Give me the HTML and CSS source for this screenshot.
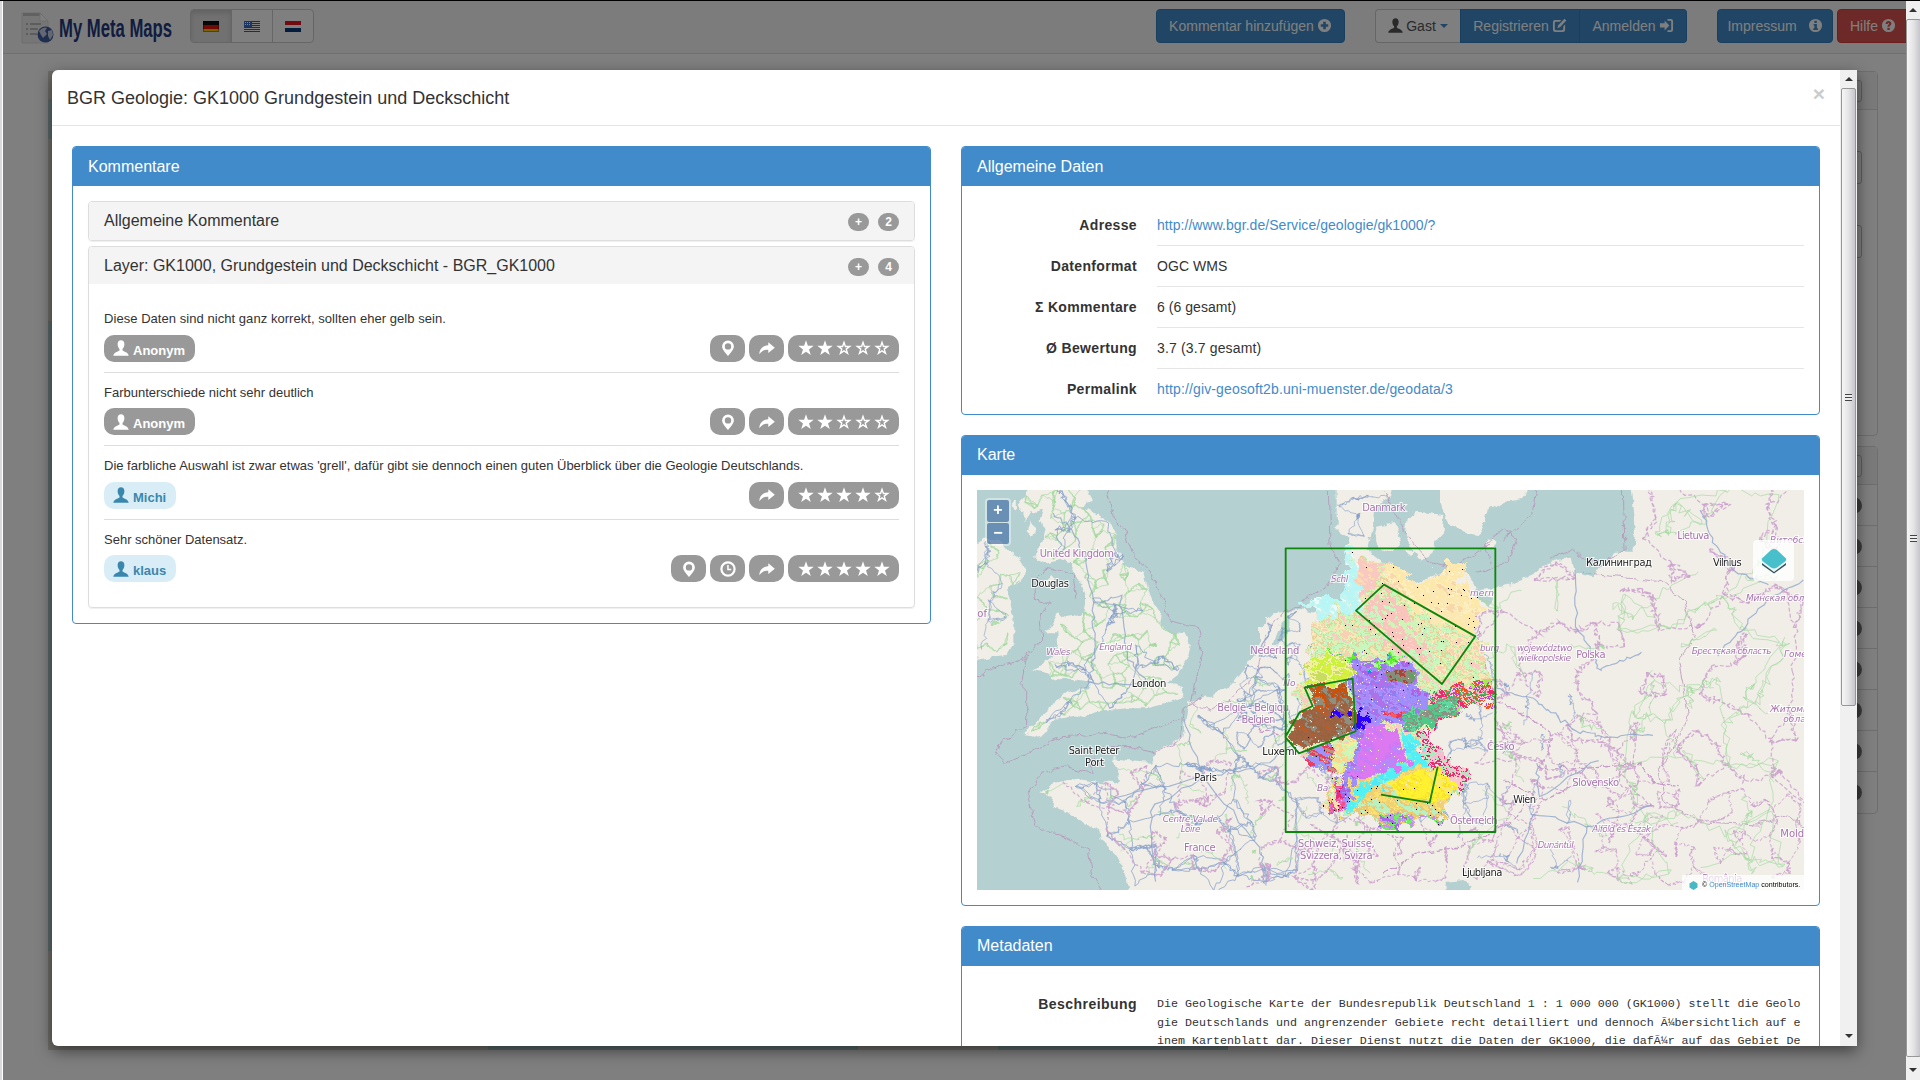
FILE: index.html
```html
<!DOCTYPE html>
<html lang="de">
<head>
<meta charset="utf-8">
<title>My Meta Maps</title>
<link rel="stylesheet" href="styles.css">
</head>
<body>
<svg class="defs" width="0" height="0" aria-hidden="true">
  <symbol id="user" viewBox="0 0 16 16"><path d="M8 .3C5.900.3 4.600 1.900 4.600 4.200c0 1.800.8 3.700 1.900 4.700v1.500C5.500 11.200.5 12.300.3 15.700h15.400c-.2-3.400-5.200-4.500-6.200-5.300V8.900c1.100-1 1.900-2.900 1.900-4.700C11.400 1.900 10.100.3 8 .3z"/></symbol>
  <symbol id="plus" viewBox="0 0 16 16"><path fill-rule="evenodd" d="M8 1a7 7 0 1 0 0 14A7 7 0 0 0 8 1zM6.600 4h2.800v2.600H12v2.800H9.400V12H6.600V9.400H4V6.600h2.600z"/></symbol>
  <symbol id="info" viewBox="0 0 16 16"><path fill-rule="evenodd" d="M8 1a7 7 0 1 0 0 14A7 7 0 0 0 8 1zM6.800 3h2.600v2.200H6.800zM6 6.400h3.500v4.400h1.100v1.900H5.600v-1.900h1.200V8.100H6z"/></symbol>
  <symbol id="question" viewBox="0 0 16 16"><path fill-rule="evenodd" d="M8 1a7 7 0 1 0 0 14A7 7 0 0 0 8 1zM5 6.300C5 4.300 6.200 3.300 8 3.300s3.100 1 3.100 2.600c0 1.900-1.900 2.100-1.900 3.300v.2H6.900c0-2.300 1.700-2.400 1.700-3.300 0-.5-.3-.7-.7-.7s-.7.3-.7.900zM6.800 10.500h2.500v2.300H6.800z"/></symbol>
  <symbol id="edit" viewBox="0 0 16 16"><path d="M3.500 2H10L8.300 4H4.300C3.600 4 3 4.600 3 5.300v6.400c0 .7.6 1.300 1.300 1.300h6.400c.7 0 1.300-.6 1.300-1.300V9l2-2v5.500a2.500 2.500 0 0 1-2.500 2.500h-8A2.500 2.500 0 0 1 1 12.500v-8A2.500 2.500 0 0 1 3.500 2z"/><path d="M13.300.7l2 2-6.600 7-3 1.100 1-3.100z"/></symbol>
  <symbol id="login" viewBox="0 0 16 16"><path d="M1 5.700h5V2.600L11 8l-5 5.200v-3H1z"/><path d="M9 1h3.500A2.500 2.500 0 0 1 15 3.500v9a2.500 2.500 0 0 1-2.500 2.500H9v-2h3.200c.5 0 .8-.3.8-.8V3.800c0-.5-.3-.8-.8-.8H9z"/></symbol>
  <symbol id="pin" viewBox="0 0 16 16"><path fill-rule="evenodd" d="M8 .5a5.900 5.900 0 0 0-5.900 5.900C2.100 10 8 15.800 8 15.800S13.900 10 13.900 6.400A5.900 5.900 0 0 0 8 .5zm0 2.700a3.200 3.200 0 1 1 0 6.400 3.200 3.200 0 0 1 0-6.400z"/></symbol>
  <symbol id="share" viewBox="0 0 16 16"><path d="M9.300 2.300L15.800 7.700l-6.500 5.200V9.800C5 9.800 2.500 11 .3 14.200.3 9.500 3.500 5.500 9.300 5.300z"/></symbol>
  <symbol id="star" viewBox="0 0 16 16"><path d="M8 .3l1.900 5.500h5.800L11 9.400l1.800 5.700L8 11.700l-4.800 3.400L5 9.400.3 5.800h5.800z"/></symbol>
  <symbol id="star-empty" viewBox="0 0 16 16"><path fill-rule="evenodd" d="M8 .3l1.900 5.500h5.800L11 9.400l1.800 5.700L8 11.700l-4.800 3.400L5 9.400.3 5.800h5.800zM8 4.600L7.100 7.200H4.500l2.100 1.600-.8 2.600L8 9.900l2.200 1.500-.8-2.600 2.100-1.600H8.900z"/></symbol>
  <symbol id="clock" viewBox="0 0 16 16"><circle cx="8" cy="8" r="6.600" fill="none" stroke="currentColor" stroke-width="2.200"/><path d="M7.200 4h1.500v3.700h2.600v1.500H7.200z"/></symbol>
</svg>

<div class="screen">
  <div class="edge"></div>
  <div class="page">
    <nav class="navbar">
      <div class="brand">
        <svg width="33" height="32" viewBox="0 0 33 32">
          <path d="M1 1h18l8 8v22H1z" fill="#ececec" stroke="#dcdcdc"/><path d="M2 1h17l3 3H2z" fill="#c3c3c3"/><path d="M19 1l8 8h-8z" fill="#fff" stroke="#ddd"/>
          <path d="M5 12h2m2 0h11M5 17h2m2 0h8M5 22h2m2 0h7" stroke="#aaa" stroke-width="1.300"/>
          <circle cx="24.500" cy="22.500" r="8" fill="#3f5a9e"/><path d="M18 19q4-5 8-3l-2 3 2 3-4 4-2-3zM27 19l4-1 1 5-3 5-2-4z" fill="#c5cfe4"/>
        </svg>
        <svg class="word" width="118" height="32" viewBox="0 0 118 32"><text class="wordmark" x="1" y="25" textLength="113" lengthAdjust="spacingAndGlyphs">My Meta Maps</text></svg>
      </div>
      <div class="langs">
        <span class="lang on"><svg width="16" height="11"><path fill="#111" d="M0 0h16v4H0z"/><path fill="#e8140c" d="M0 4h16v4H0z"/><path fill="#f4c900" d="M0 8h16v3H0z"/><path d="M.5.5h15v10H.5z" fill="none" stroke="#0005"/></svg></span>
        <span class="lang"><svg width="16" height="11"><path fill="#fff" d="M0 0h16v11H0z"/><path stroke="#e02020" d="M0 .5h16M0 2.500h16M0 4.500h16M0 6.500h16M0 8.500h16M0 10.500h16"/><path fill="#3c6cc8" d="M0 0h8v6H0z"/><path stroke="#fff" stroke-dasharray="1 1" d="M1 1.500h6M1 3.500h6"/></svg></span>
        <span class="lang"><svg width="16" height="11"><path fill="#e41420" d="M0 0h16v4H0z"/><path fill="#fff" d="M0 4h16v3H0z"/><path fill="#0a3a7a" d="M0 7h16v4H0z"/></svg></span>
      </div>
      <div class="actions">
        <span class="btn w-add">Kommentar hinzufügen <svg class="ic"><use href="#plus"/></svg></span>
        <div class="group">
          <span class="btn plain w-guest"><svg class="ic"><use href="#user"/></svg> Gast <i class="caret"></i></span>
          <span class="btn w-reg">Registrieren <svg class="ic"><use href="#edit"/></svg></span>
          <span class="btn w-log">Anmelden <svg class="ic"><use href="#login"/></svg></span>
        </div>
        <span class="btn w-imp">Impressum &nbsp;<svg class="ic"><use href="#info"/></svg></span>
        <span class="btn danger w-help">Hilfe <svg class="ic"><use href="#question"/></svg></span>
      </div>
    </nav>
    <div class="content">
      <div class="bigmap"></div>
      <aside class="side">
        <div class="box filter"><div class="box-head"><i class="ctl"></i></div><i class="ctl tall a"></i><i class="ctl tall b"></i></div>
        <div class="box list"><div class="box-head"><i class="ctl"></i></div>
          <div class="li"><i></i></div><div class="li"><i></i></div><div class="li"><i></i></div><div class="li"><i></i></div><div class="li"><i></i></div><div class="li"><i></i></div><div class="li"><i></i></div><div class="li"><i></i></div>
        </div>
      </aside>
    </div>
    <div class="backdrop"></div>

    <div class="modal">
      <div class="modal-main">
        <header class="modal-head"><h4>BGR Geologie: GK1000 Grundgestein und Deckschicht</h4><span class="close">×</span></header>
        <div class="modal-body">
          <section class="col">
            <div class="panel">
              <h3 class="panel-head">Kommentare</h3>
              <div class="panel-body">
                <div class="sub"><div class="sub-head">Allgemeine Kommentare<span class="counts"><b>+</b><b>2</b></span></div></div>
                <div class="sub open">
                  <div class="sub-head">Layer: GK1000, Grundgestein und Deckschicht - BGR_GK1000<span class="counts"><b>+</b><b>4</b></span></div>
                  <div class="comments">
                    <article class="comment"><p class="loose">Diese Daten sind nicht ganz korrekt, sollten eher gelb sein.</p>
                      <div class="meta"><span class="badge who"><svg><use href="#user"/></svg>Anonym</span><span class="badge sq"><svg><use href="#pin"/></svg></span><span class="badge sq"><svg><use href="#share"/></svg></span><span class="badge stars"><svg><use href="#star"/></svg><svg><use href="#star"/></svg><svg><use href="#star-empty"/></svg><svg><use href="#star-empty"/></svg><svg><use href="#star-empty"/></svg></span></div></article>
                    <article class="comment"><p>Farbunterschiede nicht sehr deutlich</p>
                      <div class="meta"><span class="badge who"><svg><use href="#user"/></svg>Anonym</span><span class="badge sq"><svg><use href="#pin"/></svg></span><span class="badge sq"><svg><use href="#share"/></svg></span><span class="badge stars"><svg><use href="#star"/></svg><svg><use href="#star"/></svg><svg><use href="#star-empty"/></svg><svg><use href="#star-empty"/></svg><svg><use href="#star-empty"/></svg></span></div></article>
                    <article class="comment"><p>Die farbliche Auswahl ist zwar etwas 'grell', dafür gibt sie dennoch einen guten Überblick über die Geologie Deutschlands.</p>
                      <div class="meta"><span class="badge who known"><svg><use href="#user"/></svg>Michi</span><span class="badge sq"><svg><use href="#share"/></svg></span><span class="badge stars"><svg><use href="#star"/></svg><svg><use href="#star"/></svg><svg><use href="#star"/></svg><svg><use href="#star"/></svg><svg><use href="#star-empty"/></svg></span></div></article>
                    <article class="comment"><p>Sehr schöner Datensatz.</p>
                      <div class="meta"><span class="badge who known"><svg><use href="#user"/></svg>klaus</span><span class="badge sq"><svg><use href="#pin"/></svg></span><span class="badge sq"><svg><use href="#clock"/></svg></span><span class="badge sq"><svg><use href="#share"/></svg></span><span class="badge stars"><svg><use href="#star"/></svg><svg><use href="#star"/></svg><svg><use href="#star"/></svg><svg><use href="#star"/></svg><svg><use href="#star"/></svg></span></div></article>
                  </div>
                </div>
              </div>
            </div>
          </section>

          <section class="col">
            <div class="panel">
              <h3 class="panel-head">Allgemeine Daten</h3>
              <dl class="facts">
                <div><dt>Adresse</dt><dd><a>http://www.bgr.de/Service/geologie/gk1000/?</a></dd></div>
                <div><dt>Datenformat</dt><dd>OGC WMS</dd></div>
                <div><dt>Σ Kommentare</dt><dd>6 (6 gesamt)</dd></div>
                <div><dt>Ø Bewertung</dt><dd class="score">3.7 (3.7 gesamt)</dd></div>
                <div><dt>Permalink</dt><dd><a class="perma">http://giv-geosoft2b.uni-muenster.de/geodata/3</a></dd></div>
              </dl>
            </div>

            <div class="panel">
              <h3 class="panel-head raised">Karte</h3>
              <div class="panel-body">
                <div class="map">
                  <svg class="layer" viewBox="21 60 2481 1200">
                    <filter id="rough" x="0" y="0" width="2520" height="1280" filterUnits="userSpaceOnUse"><feTurbulence type="fractalNoise" baseFrequency=".03" numOctaves="3" seed="4"/><feDisplacementMap in="SourceGraphic" scale="26" xChannelSelector="R" yChannelSelector="G"/></filter>
                    <g filter="url(#rough)" fill="#f1eee8">
                      <polygon id="gb" points="195,40 345,40 365,95 330,110 370,125 410,150 435,180 440,230 470,285 520,310 530,350 550,400 580,440 575,475 600,485 650,490 663,520 655,560 635,590 625,615 590,640 640,655 635,680 590,700 530,715 470,715 410,720 370,725 340,745 310,735 270,745 240,765 215,790 195,800 160,795 185,770 240,720 255,690 300,665 350,655 360,635 330,630 290,625 255,625 230,610 190,600 215,580 250,560 265,520 262,490 225,490 240,470 262,430 290,440 340,435 345,405 345,380 330,330 305,310 310,280 270,270 225,280 195,265 215,220 225,180 215,150 225,120 190,130 160,120 150,95"/>
                      <polygon id="ie" points="0,235 40,210 80,205 110,240 140,260 170,290 165,320 120,350 115,390 130,440 130,520 110,555 60,560 0,575"/>
                      <path d="M215 345l30-30 8 14-20 22zM165 110l15 20-20 30zM180 150l15 25-10 25-15-20zM130 90l20 20-10 10-15-15z"/>
                      <polygon id="eu" points="480,1290 460,1190 440,1150 395,1110 390,1080 340,1060 290,1025 250,1010 255,985 205,970 240,945 310,925 380,935 440,940 450,930 430,865 470,870 540,875 560,845 640,800 655,700 720,680 790,640 830,590 870,520 870,470 910,430 985,420 1050,430 1120,400 1150,370 1150,290 1130,240 1135,200 1100,180 1100,30 1270,30 1260,85 1215,110 1205,180 1190,240 1290,320 1330,340 1410,310 1470,290 1530,360 1600,350 1680,320 1760,270 1805,262 1815,310 1870,325 1920,260 1930,245 1990,245 1995,190 1980,30 2530,30 2530,1290"/>
                      <path d="M1215 170l60-10 20 50-30 40-45-20zM1310 145l40-20 70 10-5 50-25 60-40 30-30-40-15-50zM1300 240l30 10-10 15zM1410 30h270l-20 60-60 10-50 20-20 75-40-5-50-25-30-60zM1550 205l30 10-5 20-20-5z"/>
                      <path fill="#b5d0d0" d="M1430 1235l50-5 25 20-10 40h-65zM955 430l-25 40-20 55 15 5 30-50zM1520 350l50 40-15 15-40-25z"/>
                    </g>
                    <g filter="url(#rough)" fill="none" stroke="#b58fb8" stroke-width="3" opacity=".75">
                      <path d="M410 60l20 80 30 40 30 80 50 40 30 70 30 80 80 20 15 80-20 80-10 70 60 20 60-40 80-70 20-110 60-80 160-30M1075 60l5 170 30 50-40 70-70 40M21 620l60-30 80-20 20-30M320 380l-10-60-70-30-50 40 10 60 40 10-30 40 5 70-50 60-15 70 20 20v110l-70 40-20 40 30 30 60-30 110-50 130-10 60 15 40-10 70-30 60-20M370 860l30-30h80l80 20 70-40 10-90 60-40M370 860l-5 50-80-20-70 20-40 60 20 100 90 30 70 40 10 80 60 100"/>
                      <path d="M1240 60l60 120 70 90 80 20 110-70M1700 60l-10 70-90 80M1520 310l90-30 30-70-40-30-50 40 10 60M1960 60l5 180-70 35-60-10-30-30-60 30M1835 310l240 25 70 60 30 110-50 60 30 170-40 90-50 70 20 100 100 60 180 10 90-30 60 50 20 150-30 60"/>
                    </g>
                    <g filter="url(#rough)" fill="none" stroke="#c79bc8" stroke-width="4">
                      <path d="M1580 690l110 60 60 50-40 100 160-10 140-10 40 60 70 10M1600 930l120 60 90-40 40-60M1060 860l-90-60-100-20-100-90M1240 1210l100-60 140-20 150-80 40-70M1580 690l-40-120-20-140-10-60" stroke-dasharray="20 5"/>
                    </g>
                  </svg>
                  <canvas class="layer" id="raster" width="827" height="400"></canvas>
                  <svg class="layer" viewBox="21 60 2481 1200">
                    <g class="names">
                      <text x="1177" y="122" textLength="130">Danmark</text>
                      <text x="209" y="260" textLength="223">United Kingdom</text>
                      <text x="841" y="551" textLength="147">Nederland</text>
                      <text x="742" y="723" textLength="215">België - Belgiqu</text>
                      <text x="798" y="759" textLength="118">- Belgien</text>
                      <text x="642" y="1143" textLength="95">France</text>
                      <text x="984" y="1131" textLength="230">Schweiz, Suisse,</text>
                      <text x="990" y="1167" textLength="218">Svizzera, Svizra</text>
                      <text x="22" y="440">of</text>
                      <text x="2122" y="208" textLength="96">Lietuva</text>
                      <text x="1819" y="565" textLength="88">Polska</text>
                      <text x="1551" y="840" textLength="83">Česko</text>
                      <text x="1807" y="948" textLength="140">Slovensko</text>
                      <text x="1440" y="1063" textLength="143">Österreich</text>
                      <text x="2431" y="1101">Moldova</text>
                      <text x="2197" y="1236" textLength="120">România</text>
                    </g>
                    <g class="names region">
                      <text x="229" y="555" textLength="72">Wales</text>
                      <text x="388" y="540" textLength="98">England</text>
                      <text x="578" y="1056" textLength="166">Centre-Val de</text>
                      <text x="632" y="1086" textLength="60">Loire</text>
                      <text x="1083" y="335" textLength="52">Schl</text>
                      <text x="940" y="648">No</text>
                      <text x="1041" y="963" textLength="34">Ba</text>
                      <text x="1500" y="377" textLength="72">mern</text>
                      <text x="1530" y="543" textLength="58">burg</text>
                      <text x="1641" y="542" textLength="166">województwo</text>
                      <text x="1643" y="572" textLength="160">wielkopolskie</text>
                      <text x="2400" y="220">Витебская</text>
                      <text x="2328" y="393" textLength="235">Минская область</text>
                      <text x="2165" y="551" textLength="240">Брестская область</text>
                      <text x="2442" y="560">Гомель</text>
                      <text x="2400" y="727">Житомир</text>
                      <text x="2440" y="757">область</text>
                      <text x="1867" y="1085" textLength="176">Alföld és Észak</text>
                      <text x="1703" y="1133" textLength="108">Dunántúl</text>
                    </g>
                    <g class="names city">
                      <text x="184" y="352" textLength="113">Douglas</text>
                      <text x="485" y="650" textLength="104">London</text>
                      <text x="296" y="852" textLength="152">Saint Peter</text>
                      <text x="345" y="888" textLength="57">Port</text>
                      <text x="673" y="933" textLength="68">Paris</text>
                      <text x="877" y="854" textLength="104">Luxeml</text>
                      <text x="1848" y="287" textLength="198">Калининград</text>
                      <text x="2229" y="289" textLength="86">Vilnius</text>
                      <text x="1630" y="1000" textLength="68">Wien</text>
                      <text x="1476" y="1217" textLength="121">Ljubljana</text>
                    </g>
                    <g fill="none" stroke="#0c860c" stroke-width="5.500" stroke-linejoin="round">
                      <path d="M947 235h629v851H947zM1242 344l274 155-100 143-258-220zM1004 653l144-27 9 158-170 66-41-49 43-74 39-19zM1233 974l146 24 24-108"/>
                    </g>
                  </svg>
                  <div class="zoomer"><span>+</span><span>−</span></div>
                  <div class="switcher"><svg width="26" height="26" viewBox="0 0 26 26"><path d="M1 14l12 9 12-9v3L13 25.500 1 17z" fill="#35535e"/><path d="M1 12l12 9 12-9v3l-12 9-12-9z" fill="#e8f6f8"/><path d="M10 2q3-2 6 0l9 8.500q1 1.500-1 3l-8 6q-3 2-6 0l-8-6q-2-1.500-1-3z" fill="#48c0cb"/></svg></div>
                  <div class="credit"><svg width="9" height="9"><path d="M4.500 0l4 2.500v4l-4 2.500-4-2.500v-4z" fill="#48b8c4"/></svg><span>© <a>OpenStreetMap</a> contributors.</span></div>
                </div>
              </div>
            </div>

            <div class="panel">
              <h3 class="panel-head raised">Metadaten</h3>
              <dl class="facts about">
                <div><dt>Beschreibung</dt><dd class="pre">Die Geologische Karte der Bundesrepublik Deutschland 1 : 1 000 000 (GK1000) stellt die Geolo
gie Deutschlands und angrenzender Gebiete recht detailliert und dennoch Ã¼bersichtlich auf e
inem Kartenblatt dar. Dieser Dienst nutzt die Daten der GK1000, die dafÃ¼r auf das Gebiet De</dd></div>
              </dl>
            </div>
          </section>
        </div>
      </div>
      <div class="scroll"><i class="arrow up"></i><div class="thumb inner"><i class="grip"></i></div><i class="arrow down"></i></div>
    </div>
  </div>
  <div class="scroll outer"><i class="arrow up"></i><div class="thumb"><i class="grip"></i></div><i class="arrow down"></i></div>
</div>
<script src="map.js"></script>
</body>
</html>
```
FILE: styles.css
```css
* { box-sizing: border-box; }
body { margin: 0; font: 14px/20px "Liberation Sans", Arial, sans-serif; color: #333; background: #000; overflow: hidden; }
h3, h4, p, dl, dd { margin: 0; font-weight: normal; }
svg { display: block; fill: currentColor; }
.defs { position: absolute; }
a { color: #428bca; }

.screen { display: grid; grid-template-columns: 3px 1fr 14px; height: 1080px; padding-top: 1px; }
.edge { background: #d9d9dc; border-right: 1px solid #fff; }
.page { position: relative; background: #fff; overflow: hidden; }

.navbar { display: flex; height: 53px; padding: 8px 0 0 18px; background: #f8f8f8; border-bottom: 1px solid #e0e0e0; }
.brand { display: flex; flex: none; gap: 4px; width: 169px; padding-top: 3px; }
.brand svg { flex: none; overflow: visible; }
.wordmark { font: bold 25px "Liberation Sans Narrow", "Liberation Sans", sans-serif; fill: #24387e; }
.langs { display: flex; flex: none; width: 124px; height: 34px; border: 1px solid #ccc; border-radius: 4px; overflow: hidden; background: #fff; }
.lang { flex: 1; display: grid; place-items: center; border-left: 1px solid #ccc; }
.lang:first-child { border-left: 0; }
.lang.on { background: #e2e2e2; box-shadow: inset 0 3px 5px #0002; }
.actions { display: flex; flex: none; margin-left: 842px; }
.btn { display: flex; flex: none; align-items: center; justify-content: center; gap: 3px; height: 34px; color: #fff; background: #428bca; border: 1px solid #357ebd; border-radius: 4px; white-space: nowrap; padding-bottom: 1px; }
.ic { width: 15px; height: 15px; }
.group { display: flex; margin: 0 30px; }
.group .btn { border-radius: 0; }
.group .btn:first-child { border-radius: 4px 0 0 4px; }
.group .btn:last-child { border-radius: 0 4px 4px 0; border-left: 0; }
.group .plain { color: #555; background: #fff; border-color: #ccc; border-right: 0; }
.caret { margin-left: 1px; border: 4px solid transparent; border-top-color: #428bca; border-bottom: 0; }
.danger { background: #d9534f; border-color: #d43f3a; }
.w-add { width: 189px; } .w-guest { width: 85px; } .w-reg { width: 120px; } .w-log { width: 107px; }
.w-imp { width: 116px; } .w-help { width: 77px; margin-left: 4px; justify-content: flex-start; padding-left: 12px; }

.content { display: flex; justify-content: space-between; padding: 17px 28px 0 45px; }
.bigmap { width: 1180px; height: 979px; background: linear-gradient(90deg, #b5d0d0 0 8px, transparent 8px) 0 250px / 100% 630px no-repeat, linear-gradient(90deg, #b5d0d0 0 8px, transparent 8px) 0 28px / 100% 40px no-repeat, linear-gradient(90deg, #ddd9d0 0 440px, #b5d0d0 440px 810px, #ddd9d0 810px 950px, #b5d0d0 950px); }
.side { width: 300px; }
.box { background: #fff; border: 1px solid #ddd; border-radius: 4px; margin-bottom: 10px; }
.box-head { display: flex; justify-content: flex-end; height: 38px; padding: 8px 15px; background: #f5f5f5; border-bottom: 1px solid #ddd; }
.ctl { display: block; width: 60px; height: 22px; border: 1px solid #bbb; border-radius: 3px; }
.tall { height: 33px; margin: 41px 15px 0 auto; }
.filter { height: 365px; }
.li { display: flex; justify-content: flex-end; align-items: center; height: 41px; padding-right: 15px; border-bottom: 1px solid #ddd; }
.li:last-child { border: 0; }
.li i { width: 24px; height: 17px; border-radius: 9px; background: #777; }
.backdrop { position: absolute; inset: 0; background: rgba(0,0,0,.5); }

.modal { position: absolute; left: 49px; top: 69px; width: 1805px; height: 976px; display: flex; background: #fff; border-radius: 6px 0 0 6px; overflow: hidden; box-shadow: 0 5px 15px rgba(0,0,0,.5); }
.modal-main { width: 1788px; overflow: hidden; }
.modal-head { display: flex; justify-content: space-between; height: 56px; padding: 15px; border-bottom: 1px solid #e5e5e5; }
.modal-head h4 { font-size: 18px; line-height: 26px; }
.close { font: bold 21px/17px "Liberation Sans", sans-serif; color: #ccc; }
.modal-body { display: grid; grid-template-columns: 859px 859px; gap: 30px; padding: 20px; }
.panel { border: 1px solid #428bca; border-radius: 4px; margin-bottom: 20px; background: #fff; overflow: hidden; }
.panel-head { height: 39px; padding: 0 15px; font-size: 16px; line-height: 39px; color: #fff; background: #428bca; }
.raised { line-height: 37px; }
.panel-body { padding: 15px; }

.sub { border: 1px solid #ddd; border-radius: 4px; overflow: hidden; box-shadow: 0 1px 1px #0001; }
.sub + .sub { margin-top: 5px; }
.sub-head { display: flex; justify-content: space-between; align-items: center; height: 38px; padding: 0 15px; font-size: 16px; background: #f4f4f4; }
.open .sub-head { height: 37px; }
.counts { display: flex; gap: 9px; padding-top: 2px; }
.counts b { width: 21px; height: 18px; border-radius: 9px; background: #999; color: #fff; font-size: 12px; line-height: 18px; text-align: center; }
.comments { padding: 15px; }
.comment { padding: 11px 0 10px; border-bottom: 1px solid #ddd; }
.comment:last-child { border: 0; }
.comment p { font-size: 13px; line-height: 18.500px; margin-bottom: 6px; }
.comment .loose { letter-spacing: .05px; }
.meta { display: flex; gap: 4px; }
.badge { display: flex; align-items: center; height: 27px; border-radius: 10px; background: #999; color: #fff; font: bold 13px/15px "Liberation Sans", sans-serif; }
.badge svg { width: 16px; height: 16px; }
.who { margin-right: auto; padding: 4px 10px 0 9px; gap: 4px; }
.who svg { margin-top: -4px; }
.known { background: #d9edf7; color: #3a87ad; }
.sq { width: 35px; justify-content: center; }
.stars { width: 111px; justify-content: center; gap: 3px; }

.facts { padding: 9px 15px 15px; }
.facts > div { display: grid; grid-template-columns: 160px 647px; gap: 20px; }
.facts dt { padding-top: 10px; font-weight: bold; text-align: right; letter-spacing: .35px; }
.facts dd { padding: 10px 0; border-bottom: 1px solid #e5e5e5; letter-spacing: .05px; }
.facts .score { letter-spacing: .15px; }
.facts .perma { letter-spacing: .14px; }
.facts > div:first-child dt, .facts > div:first-child dd { padding-top: 20px; }
.facts > div:last-child dd { padding-bottom: 0; border: 0; }
.facts.about > div:first-child dt { padding-top: 19px; letter-spacing: .45px; }
.facts .pre { font: 11.670px/18.700px "Liberation Mono", monospace; letter-spacing: 0; white-space: pre; }

.map { position: relative; display: grid; height: 400px; background: #b5d0d0; overflow: hidden; }
.layer { grid-area: 1 / 1; width: 827px; height: 400px; }
.names text { font: 30px "DejaVu Sans", sans-serif; fill: #a673ad; stroke: #fff; stroke-width: 6px; stroke-opacity: .8; paint-order: stroke; }
.names.region text { font-style: italic; font-size: 27px; }
.names.city text { fill: #222; }
.zoomer { position: absolute; left: 8px; top: 8px; padding: 2px; display: grid; gap: 1px; background: #fff6; border-radius: 4px; }
.zoomer span { width: 22px; height: 21.500px; background: rgba(0,60,136,.5); color: #fff; font: bold 16px/20px "Liberation Sans", sans-serif; text-align: center; border-radius: 2px; }
.switcher { position: absolute; right: 10px; top: 50px; width: 41px; height: 41px; display: grid; place-items: center; background: #fffc; border-radius: 4px; }
.credit { position: absolute; right: 0; bottom: 0; display: flex; gap: 4px; align-items: center; width: 122px; height: 15px; padding: 6px 0 0 7px; background: #fffb; font-size: 7.100px; line-height: 9px; color: #000; white-space: nowrap; }

.scroll { display: flex; flex-direction: column; align-items: center; width: 17px; background: #f0f0f0; }
.arrow { flex: none; height: 18px; border: 4px solid transparent; }
.up { height: 11px; margin-bottom: 7px; border-bottom-color: #333; border-top-width: 7px; border-bottom-width: 4px; }
.down { height: 12px; margin-top: auto; border-top-color: #333; border-top-width: 4px; border-bottom-width: 7px; }
.thumb { display: grid; place-items: center; width: 15px; height: 618px; border: 1px solid #979797; border-radius: 2px; background: linear-gradient(90deg, #f6f6f6, #e4e4e6 50%, #c6c6cb); }
.grip { width: 7px; height: 7px; background: repeating-linear-gradient(#444 0 1px, #eee 1px 3px); }
.outer { width: 14px; overflow: hidden; }
.outer .thumb { height: 1038px; }
```
FILE: map.js
```js
(function () {
  var cv = document.getElementById('raster'), ctx = cv.getContext('2d');
  var s = 7;
  function rnd() {
    s = (s + 0x6D2B79F5) | 0;
    var t = Math.imul(s ^ (s >>> 15), 1 | s);
    t = (t + Math.imul(t ^ (t >>> 7), 61 | t)) ^ t;
    return ((t ^ (t >>> 14)) >>> 0) / 4294967296;
  }
  function path(str) { return new Path2D('M' + str.trim().split(/\s+/).join('L') + 'Z'); }
  function shape(id) { return path(document.getElementById(id).getAttribute('points')); }
  var probe = document.createElement('canvas').getContext('2d');
  function inside(p, x, y) { return probe.isPointInPath(p, x, y); }

  // Road and boundary networks: jittered hubs joined to their nearest neighbours.
  function net(area, box, step, color, width, links, dash) {
    var pts = [], x, y;
    for (x = box[0]; x < box[2]; x += step) for (y = box[1]; y < box[3]; y += step) {
      var a = x + (rnd() - .5) * step * 1.1, b = y + (rnd() - .5) * step * 1.1;
      if (inside(area, a, b)) pts.push([a, b]);
    }
    ctx.strokeStyle = color; ctx.lineWidth = width; ctx.setLineDash(dash || []);
    pts.forEach(function (p) {
      var near = pts.slice().sort(function (m, n) { return Math.hypot(m[0] - p[0], m[1] - p[1]) - Math.hypot(n[0] - p[0], n[1] - p[1]); });
      for (var i = 1; i <= links && i < near.length; i++) {
        var q = near[i];
        if (Math.hypot(q[0] - p[0], q[1] - p[1]) > step * 1.6) continue;
        ctx.beginPath(); ctx.moveTo(p[0], p[1]);
        for (var t = .14; t < 1; t += .14) ctx.lineTo(p[0] + (q[0] - p[0]) * t + (rnd() - .5) * step * .2, p[1] + (q[1] - p[1]) * t + (rnd() - .5) * step * .2);
        ctx.lineTo(q[0], q[1]); ctx.stroke();
      }
    });
  }
  // Long line bent by small random offsets along its segments.
  function wander(pts) {
    ctx.beginPath(); ctx.moveTo(pts[0], pts[1]);
    for (var i = 2; i < pts.length; i += 2) for (var t = .125; t <= 1; t += .125)
      ctx.lineTo(pts[i - 2] + (pts[i] - pts[i - 2]) * t + (rnd() - .5) * 12, pts[i - 1] + (pts[i + 1] - pts[i - 1]) * t + (rnd() - .5) * 12);
    ctx.stroke();
  }
  ctx.save(); ctx.scale(1 / 3, 1 / 3); ctx.translate(-21, -60);
  var gb = shape('gb'), ie = shape('ie'), eu = shape('eu');
  var green = 'rgba(165,218,160,.8)', blue = 'rgba(135,160,200,.75)', pink = 'rgba(203,160,205,.85)';
  net(gb, [150, 60, 670, 800], 30, green, 2.5, 3);
  net(gb, [150, 60, 670, 800], 80, blue, 3, 2);
  net(ie, [21, 200, 180, 580], 34, green, 2.5, 2);
  net(ie, [21, 200, 180, 580], 70, blue, 2.5, 2);
  net(eu, [200, 640, 1000, 1260], 75, blue, 3, 3);
  net(eu, [200, 640, 1250, 1260], 62, green, 2.5, 1);
  net(eu, [200, 900, 1250, 1260], 66, pink, 3.5, 2, [10, 6]);
  net(eu, [800, 430, 1010, 850], 28, blue, 2.5, 2);
  net(eu, [1090, 60, 1270, 230], 50, blue, 2.5, 2);
  net(eu, [1010, 500, 1560, 1060], 60, blue, 2.5, 2);
  net(eu, [1000, 1080, 1700, 1260], 45, pink, 3, 2, [10, 6]);
  net(eu, [1500, 640, 1850, 1240], 70, blue, 2.5, 1);
  net(eu, [1560, 350, 2500, 1240], 120, green, 2.5, 1);
  net(eu, [1560, 60, 2500, 1000], 90, pink, 3.5, 2, [12, 6]);
  net(eu, [1600, 760, 2100, 1240], 70, pink, 3, 2, [10, 5]);
  net(eu, [1900, 980, 2500, 1250], 48, pink, 3, 2, [10, 6]);
  net(eu, [2000, 80, 2500, 1250], 135, green, 2.5, 2);
  ctx.strokeStyle = blue; ctx.lineWidth = 3.5; ctx.setLineDash([]);
  [[1815,300,1820,470,1860,540,1890,595,1950,575,2020,550], [1580,655,1700,690,1760,740,1820,785,1900,800,2050,790], [2500,330,2380,400,2310,480,2240,560], [2190,120,2230,220,2290,300,2400,350], [1640,1180,1690,1030,1850,1070,1820,1240], [1850,1070,2040,1010], [1700,880,1710,980,1880,870], [250,130,310,180,350,280,370,420,370,560,360,640,520,640], [370,400,450,380,470,560,530,640], [700,920,640,750], [700,920,540,1020,560,1240], [700,920,870,1130,890,1250], [700,920,900,880,1000,790], [700,920,430,990]].forEach(wander);
  ctx.restore();

  // Geological units, most specific first; the last colours fill the rest.
  var outline = path('210,62 240,55 255,90 310,75 350,100 415,112 400,155 430,165 500,122 545,90 585,115 565,145 625,190 635,250 615,300 645,350 645,400 665,470 670,520 590,530 540,560 480,600 480,640 595,740 590,770 540,790 510,850 540,880 470,865 340,900 330,875 230,855 165,870 160,820 190,760 215,730 195,720 130,710 90,670 45,620 90,540 75,480 105,440 125,300 150,270 98,225 155,195 215,210 232,150');
  var units = [
    ['200,55 242,55 270,180 262,235 225,262 215,225 140,275 90,225 155,190 215,210 232,150', ['#b8f6f6', '#b8f6f6', '#c8f4f0', '#e8fcfc']],
    ['245,545 265,530 295,560 285,590 262,590 248,570', ['#2a00ff']],
    ['175,555 190,540 208,550 195,572', ['#2a00ff', '#2a00ff', '#7040d0']],
    ['105,475 245,450 235,505 150,530 125,500', ['#8f8f80', '#d05408', '#c84e10', '#a0643f', '#8f8f80']],
    ['90,545 130,525 240,480 258,600 90,665 55,630', ['#c85818', '#a06444', '#a06444', '#98623c', '#a06444', '#8f8f80']],
    ['60,600 95,590 110,640 85,665', ['#9c90ec', '#b06848']],
    ['105,395 190,370 255,420 245,447 100,472', ['#d8ef3e', '#c8f040', '#f0f0a0', '#c8dc60']],
    ['345,420 380,410 430,440 420,465 350,440', ['#8c8c7c', '#b04038', '#8c8c7c', '#60a060']],
    ['180,365 230,370 280,400 400,360 400,390 330,400 330,420 250,400', ['#3878f0', '#50e8d0', '#9080f0', '#60f030', '#b0f8a0']],
    ['395,600 430,620 475,700 400,720 350,760 290,775 240,840 222,820 270,765 350,722 420,700', ['#50f0f4', '#50f0f4', '#70f0e0', '#50e8f8']],
    ['185,780 215,735 215,860 160,868', ['#f02870', '#d870d0', '#f05090', '#f8e0b0']],
    ['205,640 245,610 240,680 200,730 195,700', ['#f0f098', '#ccf5b8', '#f8d890']],
    ['100,670 190,635 195,720 130,712', ['#9c94fa', '#9c94fa', '#e84060', '#c09080']],
    ['290,590 340,570 425,690 385,718 230,745 260,660', ['#dc78f0', '#dc78f0', '#d078f4', '#b888f8']],
    ['335,520 390,540 400,555 380,560', ['#e83858', '#f06060']],
    ['390,560 470,530 560,490 560,540 440,600 400,590', ['#50c888', '#8c9080', '#60d8a0', '#58b880']],
    ['470,470 680,460 680,540 540,560 480,600 480,510', ['#f02870', '#f8b8c8', '#50b060', '#f05020', '#f8d0c8', '#c040e0', '#a8e850']],
    ['440,600 490,600 600,735 590,780 540,760 460,680', ['#f8c8d0', '#e8306c', '#a8f0c0', '#f0c0d0', '#f02870', '#f8e8e8']],
    ['245,390 340,375 410,385 470,490 480,540 440,610 330,560 270,680 215,860 200,745 250,650 250,450', ['#b060e0', '#9c90fa', '#9c90fa', '#a888f4', '#b890fa', '#8c80f0', '#b070e8']],
    ['345,760 510,705 565,770 480,810 390,795', ['#fff030', '#fff030', '#f8e030', '#fff030', '#f8e878']],
    ['330,850 420,850 540,855 560,890 330,900', ['#a868e8', '#70f060', '#c090f0', '#f0c868']],
    ['200,700 620,700 620,900 150,900', ['#f0d070', '#f8e070', '#e8c878', '#b8f0c0']],
    ['340,100 640,90 650,330 500,280 400,200', ['#fbe8b8', '#fde8ac', '#fde8ac', '#fdeec0', '#f8d8a8']],
    ['260,240 340,160 430,260 470,400 380,370', ['#c8f6c0', '#f9c4bc', '#f9c4bc', '#f9c4bc', '#d0f4b8']],
    ['250,90 340,90 330,160 260,200', ['#f8dcb0', '#f9c8c0', '#f9c8c0']]
  ].map(function (u) { return [path(u[0]), u[1]]; });
  var base = ['#f9ccc0', '#c8f6bc', '#c8f6bc', '#e8d09c', '#d4f4b4', '#fbe8b8', '#f8d0b4'];

  function hash(x, y, k) { var n = Math.sin(x * 127.1 + y * 311.7 + k * 74.7) * 43758.5453; return n - Math.floor(n); }
  function noise(x, y, k) {
    var i = Math.floor(x), j = Math.floor(y), f = x - i, g = y - j;
    f = f * f * (3 - 2 * f); g = g * g * (3 - 2 * g);
    return (hash(i, j, k) * (1 - f) + hash(i + 1, j, k) * f) * (1 - g) + (hash(i, j + 1, k) * (1 - f) + hash(i + 1, j + 1, k) * f) * g;
  }
  for (var my = 50; my < 345; my++) for (var mx = 300; mx < 525; mx++) {
    var x = (mx - 293) * 3, y = (my - 40) * 3;
    var wx = x + (noise(mx / 7, my / 7, 1) - .5) * 40 + (rnd() - .5) * 6, wy = y + (noise(mx / 7, my / 7, 2) - .5) * 40 + (rnd() - .5) * 6;
    if (!inside(outline, wx, wy)) continue;
    var pal = base;
    for (var i = 0; i < units.length; i++) if (inside(units[i][0], wx, wy)) { pal = units[i][1]; break; }
    // Strata run from north-west to south-east, so the noise axes are turned.
    var u = mx * .85 + my * .5, w = my * .85 - mx * .5;
    var v = noise(u / 11, w / 5, 3) * .65 + noise(u / 3, w / 2, 4) * .35 + (rnd() - .5) * .1;
    v = Math.max(0, Math.min(.999, (v - .2) / .6));
    var c = pal[Math.floor(v * pal.length)], r = rnd();
    if (pal.length > 1 && r < .015) c = '#fdf6dc';
    if (r > .994 && (y < 400 ? x > 280 : y > 770) || r > .9988) c = '#000';
    ctx.fillStyle = c; ctx.fillRect(mx, my, 1, 1);
  }
})();
```
